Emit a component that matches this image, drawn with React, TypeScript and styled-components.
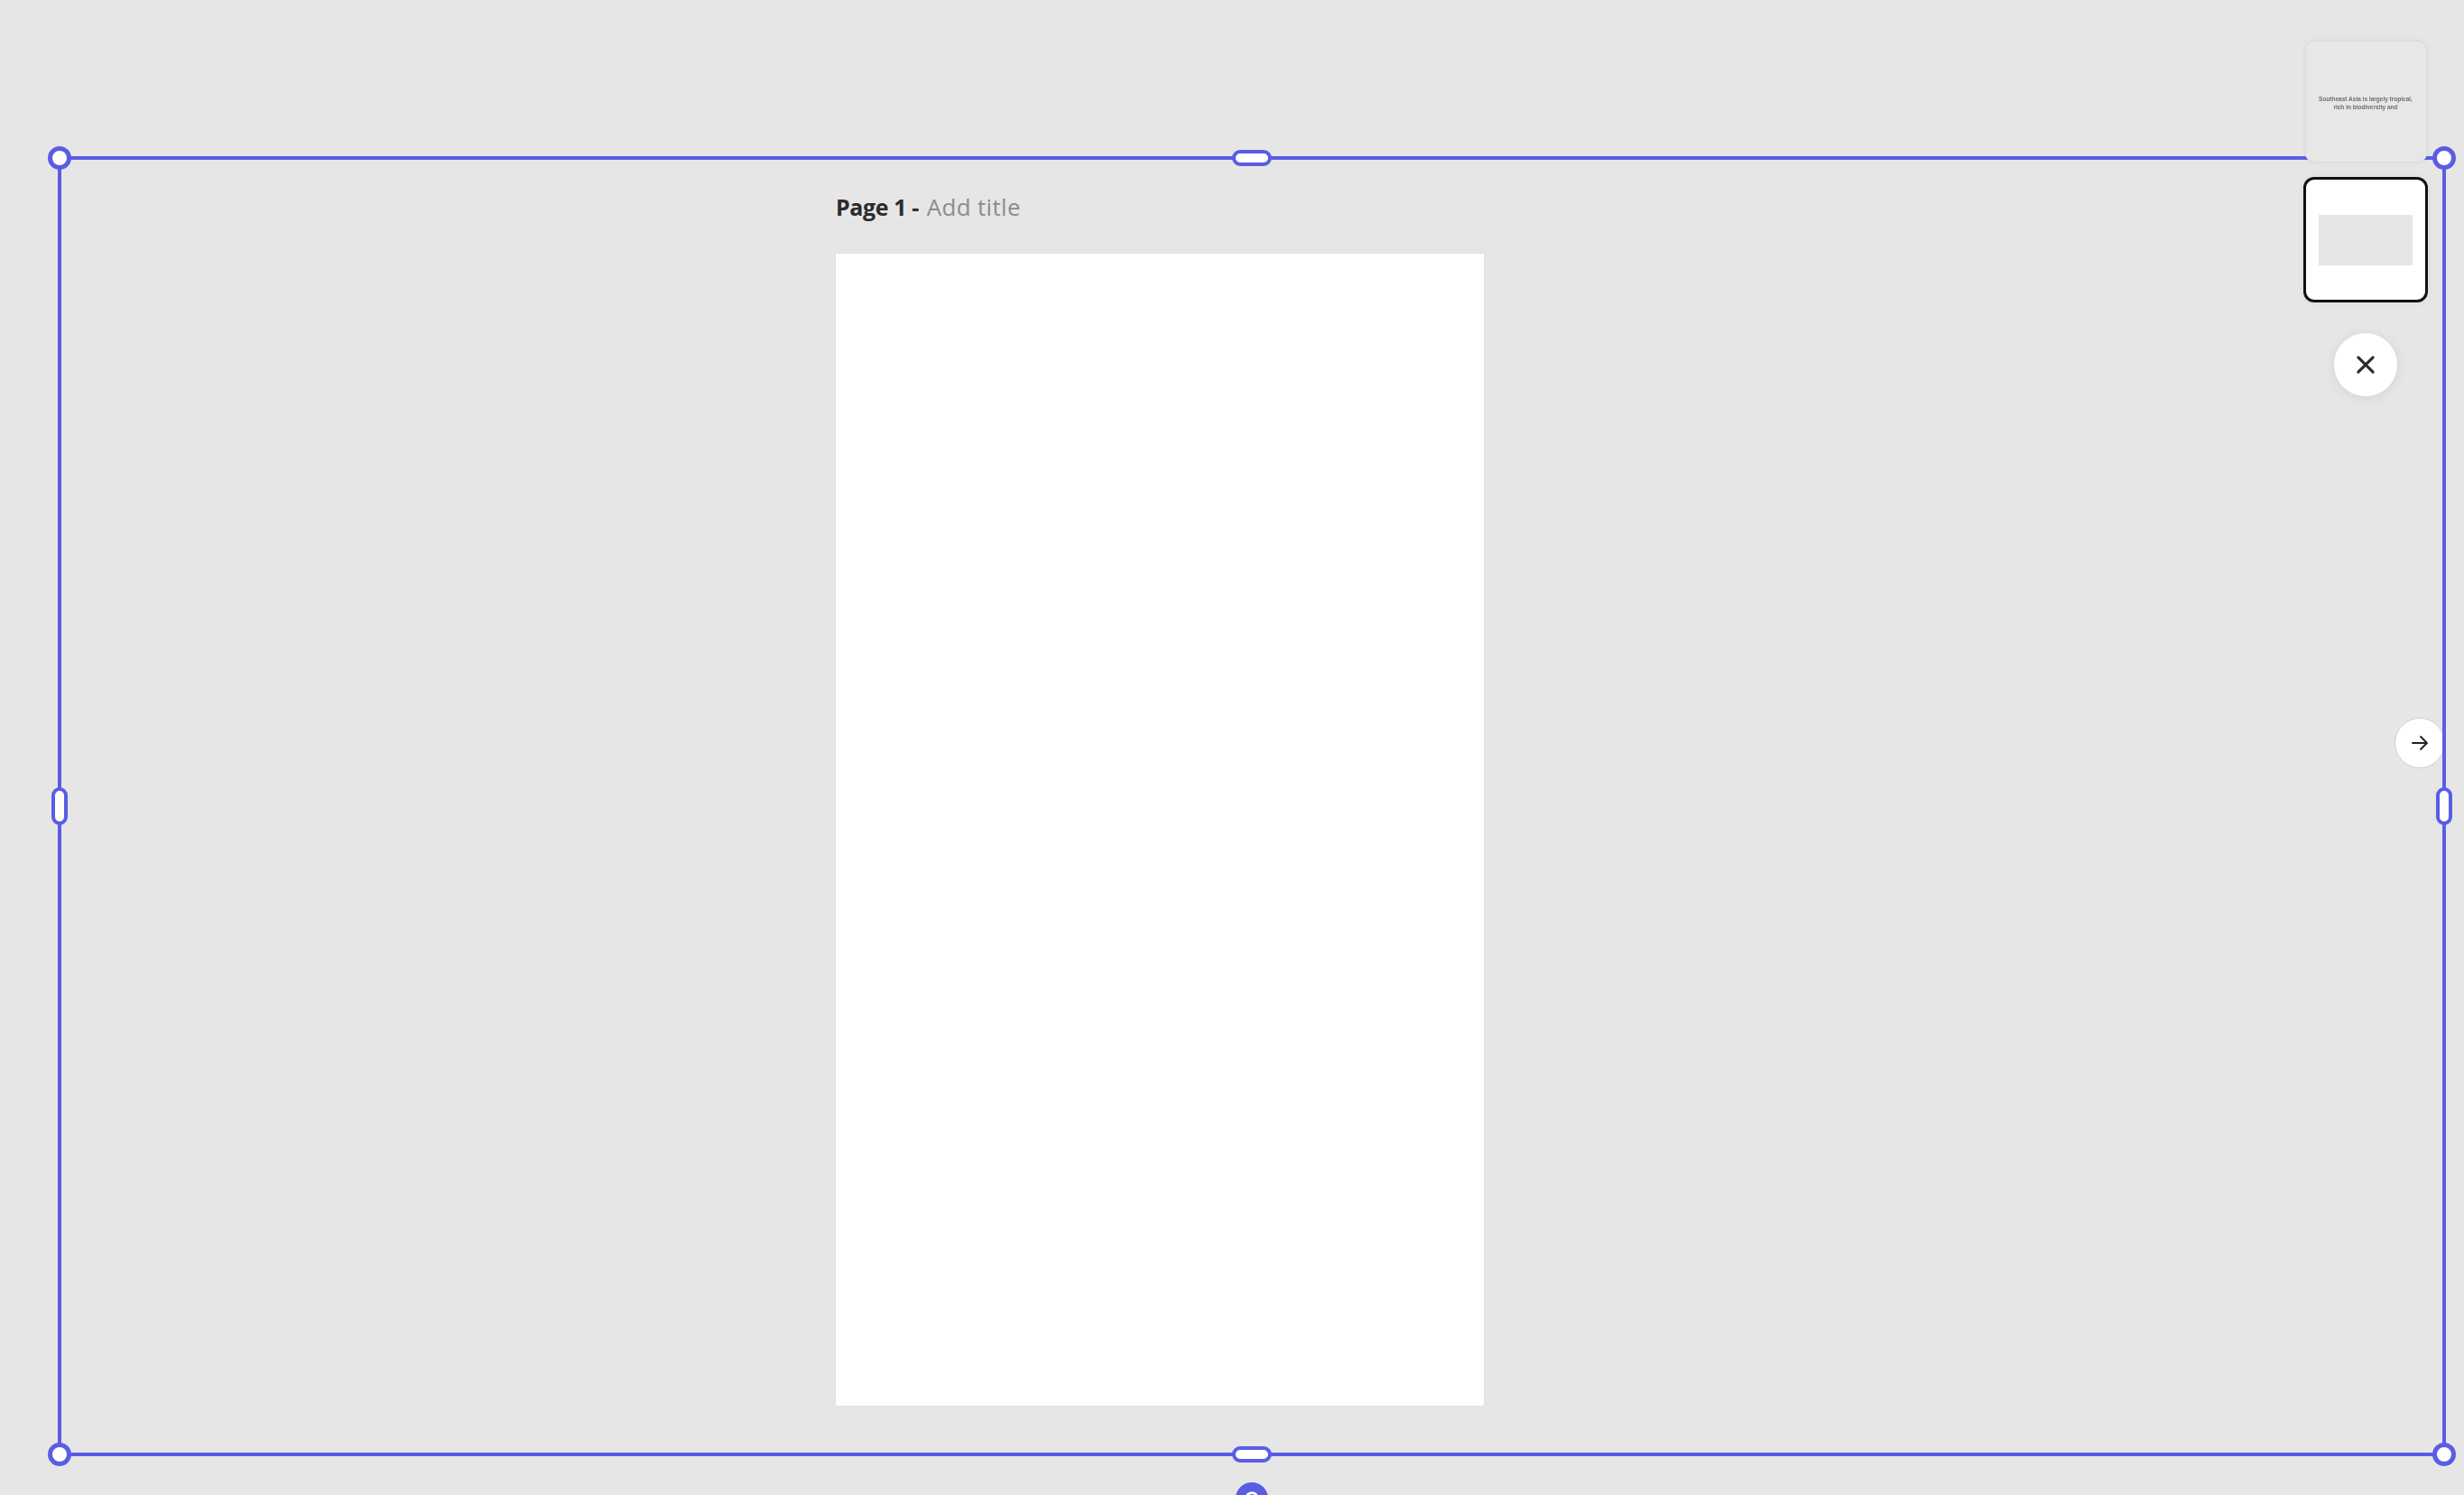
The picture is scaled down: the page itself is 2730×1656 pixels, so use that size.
import React from "react";
import styled, { createGlobalStyle } from "styled-components";

const BLUE = "#5a5de4";

const Global = createGlobalStyle`
  html, body { margin: 0; padding: 0; background: #e6e6e6; }
  body { font-family: "Open Sans", Lato, sans-serif; overflow: hidden; }
`;

const Viewport = styled.div`
  position: relative;
  width: 2730px;
  height: 1656px;
  overflow: hidden;
  background: #e6e6e6;
`;

const Stage = styled.main`
  display: flex;
  flex-direction: column;
  align-items: flex-start;
  padding: 213px 0 0 926px;
  gap: 36px;
`;

const PageTitle = styled.div`
  font-family: "Open Sans", Lato, sans-serif;
  font-size: 25px;
  line-height: 32px;
  color: #2c2c2c;
  display: flex;
  align-items: baseline;
  white-space: pre;
`;

const Strong = styled.span`
  font-weight: 700;
  letter-spacing: -0.4px;
`;

const Muted = styled.span`
  color: #8c8c8c;
  font-weight: 400;
  font-size: 26px;
  letter-spacing: 0.3px;
  margin-left: 9px;
`;

const Page = styled.div`
  width: 718px;
  height: 1276px;
  background: #ffffff;
  box-shadow: 0 0 2px rgba(0, 0, 0, 0.06);
`;

const Frame = styled.div`
  position: absolute;
  left: 64px;
  top: 173px;
  width: 2646px;
  height: 1440px;
  box-sizing: border-box;
  border: 4px solid ${BLUE};
  pointer-events: none;
  z-index: 1;
`;

const Corner = styled.div<{ $x: "l" | "r"; $y: "t" | "b" }>`
  position: absolute;
  width: 26px;
  height: 26px;
  box-sizing: border-box;
  border-radius: 50%;
  border: 5px solid ${BLUE};
  background: #fff;
  ${(p) => (p.$x === "l" ? "left: -15px;" : "right: -15px;")}
  ${(p) => (p.$y === "t" ? "top: -15px;" : "bottom: -15px;")}
`;

const HPill = styled.div<{ $y: "t" | "b" }>`
  position: absolute;
  left: 50%;
  margin-left: -22px;
  width: 44px;
  height: 18px;
  box-sizing: border-box;
  border-radius: 9px;
  border: 4px solid ${BLUE};
  background: #fff;
  ${(p) => (p.$y === "t" ? "top: -11px;" : "bottom: -11px;")}
`;

const VPill = styled.div<{ $x: "l" | "r" }>`
  position: absolute;
  top: 50%;
  margin-top: -21px;
  width: 18px;
  height: 42px;
  box-sizing: border-box;
  border-radius: 9px;
  border: 4px solid ${BLUE};
  background: #fff;
  ${(p) => (p.$x === "l" ? "left: -11px;" : "right: -11px;")}
`;

const RotateHandle = styled.div`
  position: absolute;
  left: 50%;
  margin-left: -18px;
  bottom: -69px;
  width: 36px;
  height: 36px;
  border-radius: 50%;
  background: ${BLUE};
  display: flex;
  align-items: center;
  justify-content: center;
`;

const Rail = styled.aside`
  position: absolute;
  left: 2552px;
  top: 45px;
  width: 138px;
  display: flex;
  flex-direction: column;
  align-items: center;
  z-index: 2;
`;

const Thumb = styled.div<{ $active?: boolean }>`
  box-sizing: border-box;
  width: ${(p) => (p.$active ? "138px" : "135px")};
  height: ${(p) => (p.$active ? "139px" : "135px")};
  border-radius: ${(p) => (p.$active ? "12px" : "10px")};
  background: ${(p) => (p.$active ? "#fff" : "#e7e7e7")};
  border: ${(p) => (p.$active ? "3px solid #111" : "1px solid #dcdcdc")};
  box-shadow: ${(p) => (p.$active ? "0 0 10px rgba(0,0,0,0.05)" : "0 0 6px rgba(0,0,0,0.06)")};
  display: flex;
  flex-direction: column;
  align-items: center;
  justify-content: center;
  margin-bottom: ${(p) => (p.$active ? "34px" : "16px")};
`;

const ThumbText = styled.div`
  font-family: "Liberation Sans", Arial, sans-serif;
  font-size: 6.5px;
  font-weight: 700;
  line-height: 9px;
  color: #6e6e6e;
  text-align: center;
  filter: blur(0.3px);
  margin-top: 2px;
`;

const ThumbBlock = styled.div`
  width: 104px;
  height: 56px;
  background: #e6e6e6;
`;

const CloseButton = styled.button`
  width: 70px;
  height: 70px;
  border-radius: 50%;
  border: none;
  background: #fff;
  box-shadow: 0 2px 14px rgba(0, 0, 0, 0.08);
  display: flex;
  align-items: center;
  justify-content: center;
  padding: 0;
`;

const NextButton = styled.button`
  position: absolute;
  left: 2653px;
  top: 795px;
  width: 56px;
  height: 56px;
  box-sizing: border-box;
  border-radius: 50%;
  border: 1.5px solid #cfcfcf;
  background: #fff;
  display: flex;
  align-items: center;
  justify-content: center;
  padding: 0;
  z-index: 0;
`;

export default function App() {
  return (
    <>
      <Global />
      <Viewport>
        <Stage>
          <PageTitle>
            <Strong>Page 1 -</Strong>
            <Muted>Add title</Muted>
          </PageTitle>
          <Page />
        </Stage>

        <NextButton aria-label="Next">
          <svg width="24" height="24" viewBox="0 0 24 24" fill="none" stroke="#222" strokeWidth="1.9" strokeLinecap="round" strokeLinejoin="round">
            <path d="M4 12h16M13 5l7 7-7 7" />
          </svg>
        </NextButton>

        <Frame>
          <Corner $x="l" $y="t" />
          <Corner $x="r" $y="t" />
          <Corner $x="l" $y="b" />
          <Corner $x="r" $y="b" />
          <HPill $y="t" />
          <HPill $y="b" />
          <VPill $x="l" />
          <VPill $x="r" />
          <RotateHandle>
            <svg width="22" height="22" viewBox="0 0 24 24" fill="none" stroke="#fff" strokeWidth="3" strokeLinecap="round">
              <path d="M5 12a7 7 0 1 1 2 5" />
            </svg>
          </RotateHandle>
        </Frame>

        <Rail>
          <Thumb>
            <ThumbText>
              Southeast Asia is largely tropical,
              <br />
              rich in biodiversity and
            </ThumbText>
          </Thumb>
          <Thumb $active>
            <ThumbBlock />
          </Thumb>
          <CloseButton aria-label="Close">
            <svg width="28" height="28" viewBox="0 0 24 24" fill="none" stroke="#2a2a2a" strokeWidth="2.6" strokeLinecap="round">
              <path d="M5 5l14 14M19 5L5 19" />
            </svg>
          </CloseButton>
        </Rail>
      </Viewport>
    </>
  );
}
